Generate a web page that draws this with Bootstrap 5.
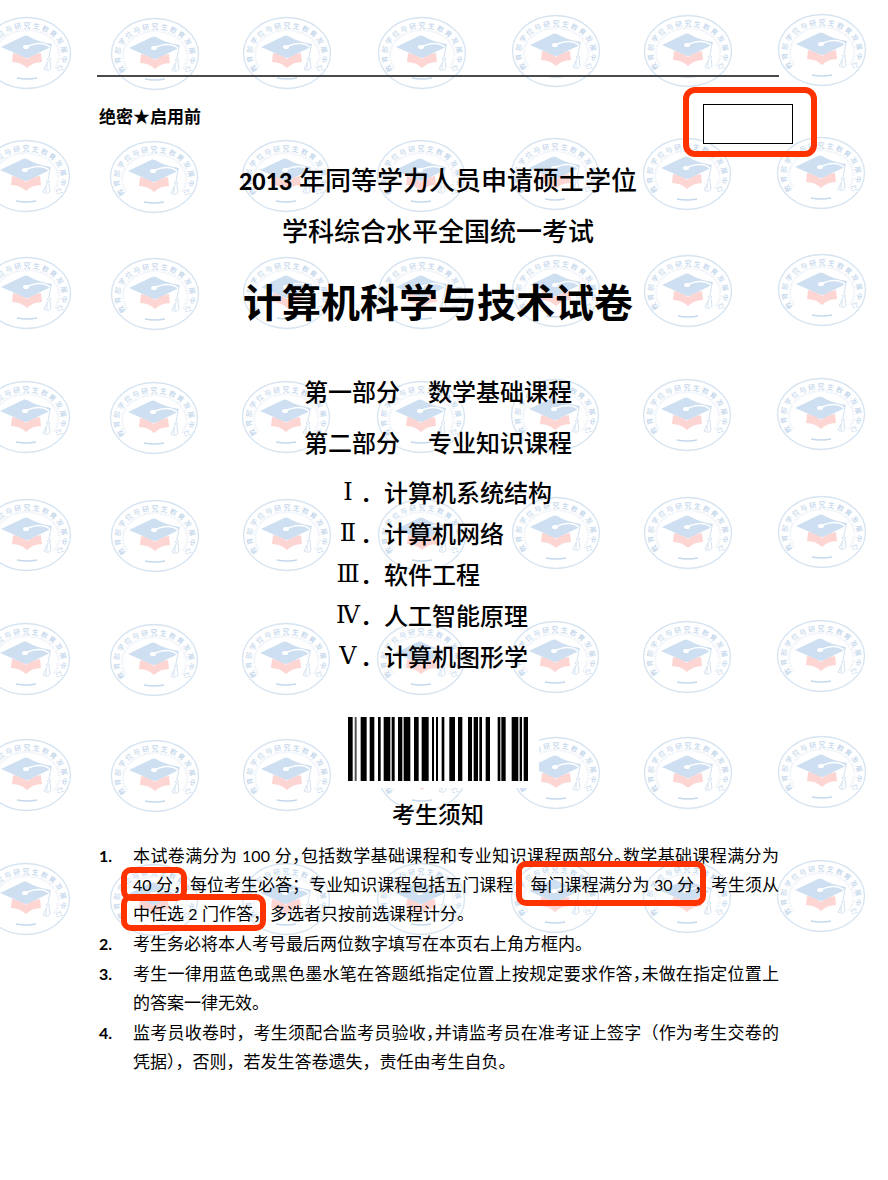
<!DOCTYPE html>
<html lang="zh-CN">
<head>
<meta charset="utf-8">
<meta name="viewport" content="width=device-width, initial-scale=1">
<title>计算机科学与技术试卷</title>
<link href="https://cdn.jsdelivr.net/npm/bootstrap@5.3.0/dist/css/bootstrap.min.css" rel="stylesheet">
<style>
  :root { --ink: #000; --mark: #ff3300; }
  body { font-family: Lato, "Noto Sans CJK SC", sans-serif; color: var(--ink); background: #fff; }
  .paper { min-height: 100vh; padding: 75px 0 96px; }
  .watermark { z-index: 0; top: 0; left: 0; }
  .sheet { z-index: 1; }
  .column { margin: 0 109px 0 97px; }
  .top-rule { height: 2px; background: #4a4a4a; }
  .top-row { padding: 10px 71px 0 99px; }
  .secret { font-size: 17px; line-height: 26px; font-weight: 700; margin-top: 17px; }
  .number-frame { border: 6px solid var(--mark); border-radius: 12px; padding: 11px 18px 7px 14px; }
  .number-box { width: 90px; height: 40px; border: 1px solid #000; border-radius: 0; padding: 4px; display: block; background: #fff; }
  .exam-name { font-size: 26px; line-height: 46px; font-weight: 500; margin-bottom: 4px; }
  .exam-name b { font-weight: 900; font-size: 23px; }
  .subject { font-size: 39px; line-height: 48px; font-weight: 700; margin: 24px 0 40px; }
  .part-line { font-size: 24px; line-height: 51px; font-weight: 500; gap: 28px; }
  .topics { font-size: 24px; line-height: 41px; font-weight: 500; padding-left: 12px; margin: 4px 0 29px; }
  .numeral { width: 24px; font-family: "DejaVu Serif", serif; font-weight: 400; display: flex; justify-content: center; }
  .barcode { background: #fff; padding: 11px 11px 7px; }
  .notice-title { font-size: 23px; line-height: 30px; font-weight: 500; margin: 11px 0 12px; }
  .notices { font-size: 17px; line-height: 29px; }
  .notices li { margin-bottom: 1px; padding-left: 2px; }
  .item-no { width: 34px; flex: none; font-size: 16px; font-weight: 700; }
  .num { font-size: 16px; }
  .full { display: block; text-align: justify; text-align-last: justify; white-space: nowrap; }
  .end { display: block; }
  .half { font-feature-settings: "halt"; }
  .ring { position: relative; }
  .ring::after { content: ""; position: absolute; inset: -7px 3px -6px -12px; border: 6px solid var(--mark); border-radius: 10px; }
  .ring-tall::after { inset: -13px 5px -11px -14px; }
  .ring-low::after { inset: -9px 4px -7px -12px; }
</style>
</head>
<body>
<div class="paper position-relative overflow-hidden">

  <svg class="watermark position-absolute w-100" viewBox="0 0 888 1180" aria-hidden="true">
    <defs>
      <g id="seal">
        <ellipse rx="43.500" ry="35.500" fill="#fff" fill-opacity=".2" stroke="#d6e4f1" stroke-width="1.300"/>
        <path id="outerArc" d="M-27 19 A35 27 0 1 1 27 19" fill="none"/>
        <path id="innerArc" d="M-22 19 A31 24 0 1 1 22 19" fill="none"/>
        <text font-size="7" fill="#b9d0e8" text-anchor="middle"><textPath href="#outerArc" startOffset="50%">教 育 部 学 位 与 研 究 生 教 育 发 展 中 心</textPath></text>
        <text font-size="3" fill="#dde8f3" text-anchor="middle"><textPath href="#innerArc" startOffset="50%">CHINA ACADEMIC DEGREES &amp; GRADUATE EDUCATION DEVELOPMENT CENTER</textPath></text>
        <path d="M-14 0 Q-6 1 0 6 Q6 1 14 0 L15 9 Q6 9 0 15 Q-6 9 -15 9Z" fill="#fdd6d3"/>
        <path d="M-26 -6 L-3 -17 Q-1 -18 1 -17 Q11 -11 25 -9 L24 -6 L3 4 Q0 6 -3 4Z" fill="#cddff0"/>
        <path d="M-1 -6 Q14 -13 23 -6 L22 4" fill="none" stroke="#fff" stroke-width="1.500"/>
        <ellipse cx="-1" cy="-6" rx="3" ry="2" fill="#fff"/>
        <path d="M24 -7 L22 4 M20 6 Q22 3 24 6 Q22 9 20 6 M21 8 L17 16 Q22 19 24 15 L23 8 M20 10 V16" fill="none" stroke="#d3e2f1"/>
        <path d="M-10 25 Q0 27 10 25" fill="none" stroke="#c5d9ec" stroke-width="1.300"/>
      </g>
      <g id="sealRow">
        <use href="#seal" x="27" y="0"/><use href="#seal" x="155" y="1"/><use href="#seal" x="287" y="0"/><use href="#seal" x="422" y="0"/><use href="#seal" x="556" y="-2"/><use href="#seal" x="688" y="-2"/><use href="#seal" x="822" y="-3"/>
      </g>
    </defs>
    <use href="#sealRow" y="53"/>
    <use href="#sealRow" x="-1" y="176"/>
    <use href="#sealRow" y="293"/>
    <use href="#sealRow" x="-1" y="417"/>
    <use href="#sealRow" y="535"/>
    <use href="#sealRow" x="-1" y="659"/>
    <use href="#sealRow" y="775"/>
    <use href="#sealRow" x="-1" y="899"/>
  </svg>

  <main class="sheet position-relative">
    <div class="column top-rule"></div>

    <header class="top-row d-flex justify-content-between align-items-start">
      <div class="secret">绝密★启用前</div>
      <div class="number-frame"><input class="number-box" type="text" maxlength="2" aria-label="考号最后两位数字"></div>
    </header>

    <div class="column text-center">
      <div class="exam-name"><b>2013</b> 年同等学力人员申请硕士学位</div>
      <div class="exam-name">学科综合水平全国统一考试</div>
      <h1 class="subject">计算机科学与技术试卷</h1>
      <div class="part-line d-flex justify-content-center"><span>第一部分</span><span>数学基础课程</span></div>
      <div class="part-line d-flex justify-content-center"><span>第二部分</span><span>专业知识课程</span></div>
    </div>

    <div class="column d-flex flex-column align-items-center">
      <ul class="topics list-unstyled">
        <li class="d-flex"><span class="numeral">Ⅰ</span><span>．计算机系统结构</span></li>
        <li class="d-flex"><span class="numeral">Ⅱ</span><span>．计算机网络</span></li>
        <li class="d-flex"><span class="numeral">Ⅲ</span><span>．软件工程</span></li>
        <li class="d-flex"><span class="numeral">Ⅳ</span><span>．人工智能原理</span></li>
        <li class="d-flex"><span class="numeral">Ⅴ</span><span>．计算机图形学</span></li>
      </ul>
      <div class="barcode">
        <svg class="d-block" width="180" height="64" viewBox="27 0 540 192" role="img" aria-label="条形码">
          <path d="M27 0h14v192h-14zM65 0h18v192h-18zM92 0h14v192h-14zM117 0h8v192h-8zM134 0h20v192h-20zM158 0h9v192h-9zM177 0h13v192h-13zM194 0h20v192h-20zM225 0h14v192h-14zM248 0h21v192h-21zM279 0h6v192h-6zM291 0h6v192h-6zM308 0h8v192h-8zM331 0h17v192h-17zM357 0h13v192h-13zM387 0h12v192h-12zM404 0h13v192h-13zM421 0h8v192h-8zM440 0h13v192h-13zM476 0h8v192h-8zM487 0h13v192h-13zM518 0h20v192h-20zM542 0h7v192h-7zM554 0h13v192h-13z"/>
          <path d="M47 0h6v192h-6z" fill="#555"/>
        </svg>
      </div>
      <h2 class="notice-title">考生须知</h2>
    </div>

    <ol class="column notices list-unstyled">
      <li class="d-flex"><span class="item-no">1.</span>
        <div class="flex-grow-1">
          <span class="full">本试卷满分为 <span class="num">100</span> 分<span class="half">，</span>包括数学基础课程和专业知识课程两部分<span class="half">。</span>数学基础课程满分为</span>
          <span class="full"><span class="ring"><span class="num">40</span> 分，</span>每位考生必答；专业知识课程包括五门课程，<span class="ring ring-tall">每门课程满分为 <span class="num">30</span> 分，</span>考生须从</span>
          <span class="end"><span class="ring ring-low">中任选 <span class="num">2</span> 门作答，</span>多选者只按前选课程计分。</span>
        </div>
      </li>
      <li class="d-flex"><span class="item-no">2.</span>
        <div class="flex-grow-1"><span class="end">考生务必将本人考号最后两位数字填写在本页右上角方框内。</span></div>
      </li>
      <li class="d-flex"><span class="item-no">3.</span>
        <div class="flex-grow-1">
          <span class="full">考生一律用蓝色或黑色墨水笔在答题纸指定位置上按规定要求作答<span class="half">，</span>未做在指定位置上</span>
          <span class="end">的答案一律无效。</span>
        </div>
      </li>
      <li class="d-flex"><span class="item-no">4.</span>
        <div class="flex-grow-1">
          <span class="full">监考员收卷时，考生须配合监考员验收<span class="half">，</span>并请监考员在准考证上签字（作为考生交卷的</span>
          <span class="end">凭据<span class="half">）</span>，否则，若发生答卷遗失，责任由考生自负。</span>
        </div>
      </li>
    </ol>
  </main>
</div>
<script src="https://cdn.jsdelivr.net/npm/bootstrap@5.3.0/dist/js/bootstrap.bundle.min.js"></script>
</body>
</html>
